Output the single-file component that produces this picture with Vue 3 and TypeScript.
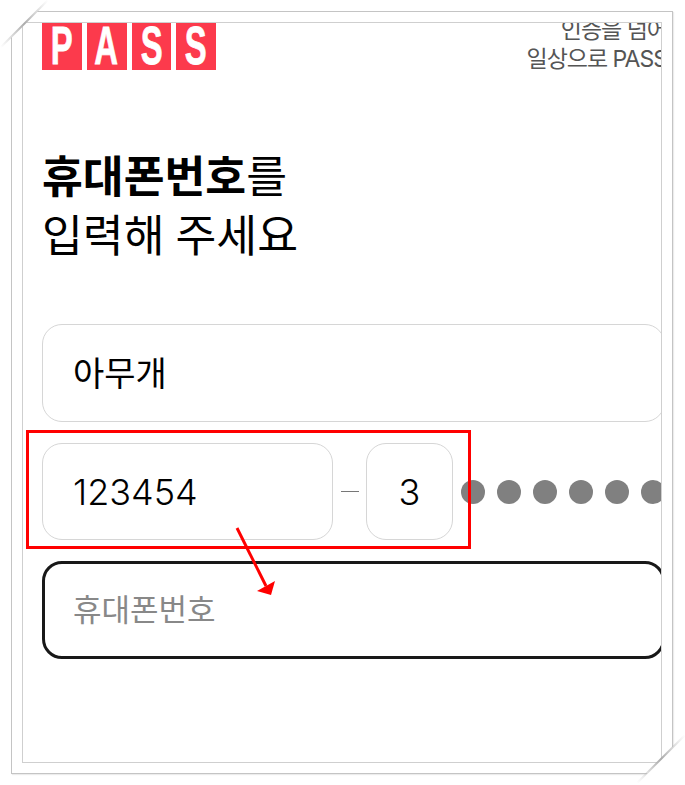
<script setup lang="ts">
const letters: string[] = ['P', 'A', 'S', 'S']
const dots: number[] = [1, 2, 3, 4, 5, 6]
</script>

<template>
  <div class="page">
    <div class="frame">
      <div class="clip">
        <main class="content">
          <header class="top">
            <div class="logo">
              <div v-for="(l, i) in letters" :key="i" class="tile"><span>{{ l }}</span></div>
            </div>
            <p class="slogan">인증을 넘어<br />일상으로 PASS</p>
          </header>
          <h1 class="title"><b>휴대폰번호</b>를<br />입력해 주세요</h1>
          <div class="fields">
            <div class="field name">아무개</div>
            <div class="id-row">
              <div class="field birth">123454</div>
              <div class="dash"></div>
              <div class="field gender">3</div>
              <div class="dots">
                <i v-for="d in dots" :key="d" class="dot"></i>
              </div>
            </div>
            <div class="field phone">휴대폰번호</div>
          </div>
        </main>
      </div>
    </div>
    <svg class="marks" width="685" height="785" viewBox="0 0 685 785">
      <defs>
        <linearGradient id="fadeA" x1="0" y1="47" x2="48" y2="0" gradientUnits="userSpaceOnUse">
          <stop offset="0" stop-color="#bbb" stop-opacity="0" />
          <stop offset="0.5" stop-color="#aaa" />
          <stop offset="1" stop-color="#bbb" stop-opacity="0" />
        </linearGradient>
        <linearGradient id="fadeB" x1="637" y1="783" x2="685" y2="735" gradientUnits="userSpaceOnUse">
          <stop offset="0" stop-color="#bbb" stop-opacity="0" />
          <stop offset="0.5" stop-color="#aaa" />
          <stop offset="1" stop-color="#bbb" stop-opacity="0" />
        </linearGradient>
      </defs>
      <polygon points="0,0 49,0 0,49" fill="#fff" />
      <polygon points="685,785 636,785 685,734" fill="#fff" />
      <line x1="1" y1="47" x2="48" y2="0" stroke="url(#fadeA)" stroke-width="2" />
      <line x1="637" y1="783" x2="685" y2="735" stroke="url(#fadeB)" stroke-width="2" />
      <rect x="27.5" y="431.5" width="442" height="116" fill="none" stroke="#ff0000" stroke-width="3" />
      <line x1="237" y1="528" x2="266" y2="586" stroke="#ff0000" stroke-width="3" />
      <polygon points="257,591 275,581 271,595" fill="#ff0000" />
    </svg>
  </div>
</template>

<style>
html,
body {
  margin: 0;
  background: #fff;
}
</style>

<style scoped>
.page {
  position: relative;
  width: 685px;
  height: 785px;
  overflow: hidden;
  background: #fff;
  padding: 11px 0 0 11px;
  box-sizing: border-box;
  font-family: Inter, "Noto Sans CJK KR", sans-serif;
}
.frame {
  width: 662px;
  height: 763px;
  box-sizing: border-box;
  border: 1px solid #c4c4c4;
  box-shadow: 1px 1px 1px #ececec;
  padding: 10px;
}
.clip {
  width: 638px;
  height: 739px;
  box-sizing: content-box;
  border: 1px solid #cfcfcf;
  overflow: hidden;
}
.content {
  width: 623px;
  margin-left: 19px;
  margin-top: -1px;
}
.top {
  display: flex;
  justify-content: space-between;
  align-items: flex-end;
  height: 48px;
}
.logo {
  display: flex;
  gap: 5px;
  flex: none;
}
.tile {
  width: 39.75px;
  height: 48px;
  background: #fc3a4c;
  display: flex;
  align-items: center;
  justify-content: center;
}
.tile span {
  color: #fff;
  font-family: "Liberation Sans", sans-serif;
  font-weight: 700;
  font-size: 53px;
  line-height: 48px;
  -webkit-text-stroke: 0.8px #fff;
  transform: scaleX(0.62);
}
.slogan {
  margin: 0 -2px -4px 0;
  text-align: right;
  color: #555;
  font-size: 23px;
  line-height: 29px;
  letter-spacing: -1px;
  white-space: nowrap;
}
.title {
  margin: 78px 0 0;
  font-size: 44.4px;
  line-height: 59px;
  font-weight: 400;
  color: #000;
  word-spacing: -1.5px;
}
.title b {
  font-weight: 700;
}
.fields {
  margin-top: 58px;
  display: flex;
  flex-direction: column;
  gap: 21px;
}
.field {
  box-sizing: border-box;
  height: 97px;
  border: 1px solid #d6d6d6;
  border-radius: 20px;
  padding-left: 30px;
  display: flex;
  align-items: center;
  font-size: 36px;
  font-weight: 350;
  color: #000;
}
.name {
  height: 98px;
  font-size: 34px;
  font-weight: 400;
  padding-bottom: 3px;
}
.id-row {
  display: flex;
  align-items: center;
}
.birth {
  width: 291px;
  flex: none;
}
.dash {
  width: 18px;
  height: 1px;
  background: #777;
  margin: 0 7px 0 8px;
  flex: none;
}
.gender {
  width: 87px;
  flex: none;
  padding-left: 0;
  justify-content: center;
}
.dots {
  display: flex;
  gap: 12px;
  margin-left: 8px;
  flex: none;
}
.dot {
  display: block;
  width: 24px;
  height: 24px;
  border-radius: 50%;
  background: #808080;
}
.phone {
  height: 98px;
  border: 3px solid #181818;
  padding-left: 28px;
  padding-bottom: 5px;
  color: #888;
  font-size: 31px;
  font-weight: 400;
}
.marks {
  position: absolute;
  left: 0;
  top: 0;
  pointer-events: none;
}
</style>
